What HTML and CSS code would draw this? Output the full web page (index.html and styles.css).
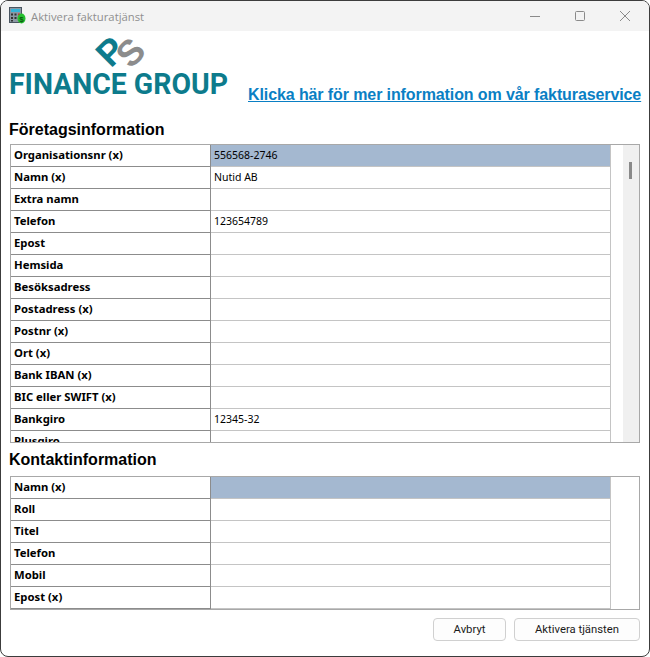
FILE: index.html
```html
<!DOCTYPE html>
<html lang="sv">
<head>
<meta charset="utf-8">
<title>Aktivera fakturatjänst</title>
<link rel="stylesheet" href="styles.css">
</head>
<body>
<div class="window">
  <header class="titlebar">
    <svg class="app-icon" width="18" height="18" viewBox="0 0 18 18">
      <rect x="0.5" y="0.5" width="12" height="15" fill="#8b98a3" stroke="#4a5560"/>
      <rect x="2" y="2" width="9" height="3" fill="#35b4d8"/>
      <rect x="2" y="6.5" width="2" height="2" fill="#333"/><rect x="5.5" y="6.5" width="2" height="2" fill="#333"/><rect x="9" y="6.5" width="2" height="2" fill="#c33"/>
      <rect x="2" y="10" width="2" height="2" fill="#333"/><rect x="5.5" y="10" width="2" height="2" fill="#333"/>
      <rect x="2" y="13" width="2" height="1.5" fill="#333"/>
      <ellipse cx="12.5" cy="11.5" rx="4" ry="5" fill="#25c02e"/>
      <text x="12.5" y="15" class="app-icon-s">$</text>
    </svg>
    <span class="title">Aktivera fakturatjänst</span>
    <div class="controls">
      <svg width="12" height="12" viewBox="0 0 12 12"><path d="M1 6.5h10" stroke="#8a8a8a" fill="none"/></svg>
      <svg width="12" height="12" viewBox="0 0 12 12"><rect x="1.5" y="1.5" width="9" height="9" rx="1" stroke="#8a8a8a" fill="none"/></svg>
      <svg width="12" height="12" viewBox="0 0 12 12"><path d="M1 1l10 10M11 1L1 11" stroke="#8a8a8a" fill="none"/></svg>
    </div>
  </header>
  <main class="content">
    <div class="brand">
      <svg class="logo" width="222" height="66" viewBox="0 0 222 66">
        <text class="logo-p" transform="translate(101 18) rotate(-45)" y="13">P</text>
        <text class="logo-s" transform="translate(121 19) rotate(-45)" y="13">S</text>
        <text class="logo-name" x="0" y="61" textLength="219" lengthAdjust="spacingAndGlyphs">FINANCE GROUP</text>
      </svg>
      <a class="info-link" href="#">Klicka här för mer information om vår fakturaservice</a>
    </div>
    <h2 class="section company">Företagsinformation</h2>
    <div class="panel panel-company">
      <div class="rows">
        <div class="row"><div class="label">Organisationsnr (x)</div><div class="value selected">556568-2746</div></div>
        <div class="row"><div class="label">Namn (x)</div><div class="value">Nutid AB</div></div>
        <div class="row"><div class="label">Extra namn</div><div class="value"></div></div>
        <div class="row"><div class="label">Telefon</div><div class="value">123654789</div></div>
        <div class="row"><div class="label">Epost</div><div class="value"></div></div>
        <div class="row"><div class="label">Hemsida</div><div class="value"></div></div>
        <div class="row"><div class="label">Besöksadress</div><div class="value"></div></div>
        <div class="row"><div class="label">Postadress (x)</div><div class="value"></div></div>
        <div class="row"><div class="label">Postnr (x)</div><div class="value"></div></div>
        <div class="row"><div class="label">Ort (x)</div><div class="value"></div></div>
        <div class="row"><div class="label">Bank IBAN (x)</div><div class="value"></div></div>
        <div class="row"><div class="label">BIC eller SWIFT (x)</div><div class="value"></div></div>
        <div class="row"><div class="label">Bankgiro</div><div class="value">12345-32</div></div>
        <div class="row"><div class="label">Plusgiro</div><div class="value"></div></div>
      </div>
      <div class="gutter"></div>
      <div class="scrollbar"><div class="thumb"></div></div>
    </div>
    <h2 class="section contact">Kontaktinformation</h2>
    <div class="panel panel-contact">
      <div class="rows">
        <div class="row"><div class="label">Namn (x)</div><div class="value selected"></div></div>
        <div class="row"><div class="label">Roll</div><div class="value"></div></div>
        <div class="row"><div class="label">Titel</div><div class="value"></div></div>
        <div class="row"><div class="label">Telefon</div><div class="value"></div></div>
        <div class="row"><div class="label">Mobil</div><div class="value"></div></div>
        <div class="row"><div class="label">Epost (x)</div><div class="value"></div></div>
      </div>
    </div>
    <footer class="actions">
      <button class="btn btn-cancel" type="button">Avbryt</button>
      <button class="btn btn-ok" type="button">Aktivera tjänsten</button>
    </footer>
  </main>
</div>
</body>
</html>
```
FILE: styles.css
```css
* { box-sizing: border-box; }
html, body { margin: 0; height: 100%; background: #fff; overflow: hidden; }
.window {
  width: 650px;
  height: 657px;
  border: 1px solid #3c3c3c;
  border-radius: 8px;
  overflow: hidden;
  background: #fff;
  display: flex;
  flex-direction: column;
}
.titlebar {
  height: 30px;
  flex: none;
  background: #f3f3f3;
  display: flex;
  align-items: center;
  padding-left: 8px;
}
.app-icon { flex: none; }
.app-icon-s { font: bold 8px "Liberation Sans", sans-serif; fill: #0a5a10; text-anchor: middle; }
.title {
  margin-left: 4px;
  font: 11.3px "Open Sans", sans-serif;
  color: #8f8f8f;
}
.controls {
  margin-left: auto;
  display: flex;
  gap: 33px;
  padding-right: 18px;
}
.content { flex: 1; display: flex; flex-direction: column; padding: 0 9px; }
.brand { height: 87px; display: flex; align-items: flex-start; }
.logo { flex: none; margin-left: -1px; margin-top: 2px; }
.logo-p { font: bold 36px "Liberation Sans", sans-serif; fill: #0d7b8c; text-anchor: middle; }
.logo-s { font: bold 36px "Liberation Sans", sans-serif; fill: #8c8c8c; text-anchor: middle; }
.logo-name { font: bold 30px "Roboto", sans-serif; fill: #0d7b8c; }
.info-link {
  margin-left: 17px;
  margin-top: 54px;
  font: bold 16px "Liberation Sans", sans-serif;
  letter-spacing: -0.1px;
  line-height: 20px;
  color: #0a7fc4;
  white-space: nowrap;
}
.section {
  margin: 0 0 0 -1px;
  font: bold 16px "Liberation Sans", sans-serif;
  line-height: 20px;
  color: #000;
}
.company { margin-top: 2px; }
.contact { margin-top: 7px; }
.panel {
  display: flex;
  width: 630px;
  border: 1px solid #a8a8a8;
  overflow: hidden;
  margin-top: 4px;
}
.panel-company { height: 299px; }
.panel-contact { height: 134px; margin-top: 6px; }
.rows { width: 600px; flex: none; }
.row { display: flex; height: 22px; }
.label {
  width: 200px;
  flex: none;
  padding-left: 3px;
  font: bold 11.3px/20px "Noto Sans", sans-serif;
  color: #000;
  border-right: 1px solid #8c8c8c;
  border-bottom: 1px solid #8c8c8c;
  white-space: nowrap;
}
.value {
  flex: 1;
  padding-left: 3px;
  font: 10.5px/21px "Noto Sans", sans-serif;
  color: #000;
  border-bottom: 1px solid #c4c4c4;
  border-right: 1px solid #c4c4c4;
}
.selected { background: #a4b8d0; }
.gutter { width: 12px; flex: none; }
.scrollbar {
  width: 16px;
  flex: none;
  background: #f0f0f0;
  padding: 17px 0 0 6px;
}
.thumb { width: 3px; height: 17px; background: #8a8a8a; }
.actions {
  display: flex;
  justify-content: flex-end;
  gap: 8px;
  margin-top: 8px;
}
.btn {
  height: 23px;
  background: #fdfdfd;
  border: 1px solid #d0d0d0;
  border-radius: 4px;
  font: 11.3px "Roboto", sans-serif;
  color: #1a1a1a;
  padding: 0;
}
.btn-cancel { width: 73px; }
.btn-ok { width: 126px; }
```
